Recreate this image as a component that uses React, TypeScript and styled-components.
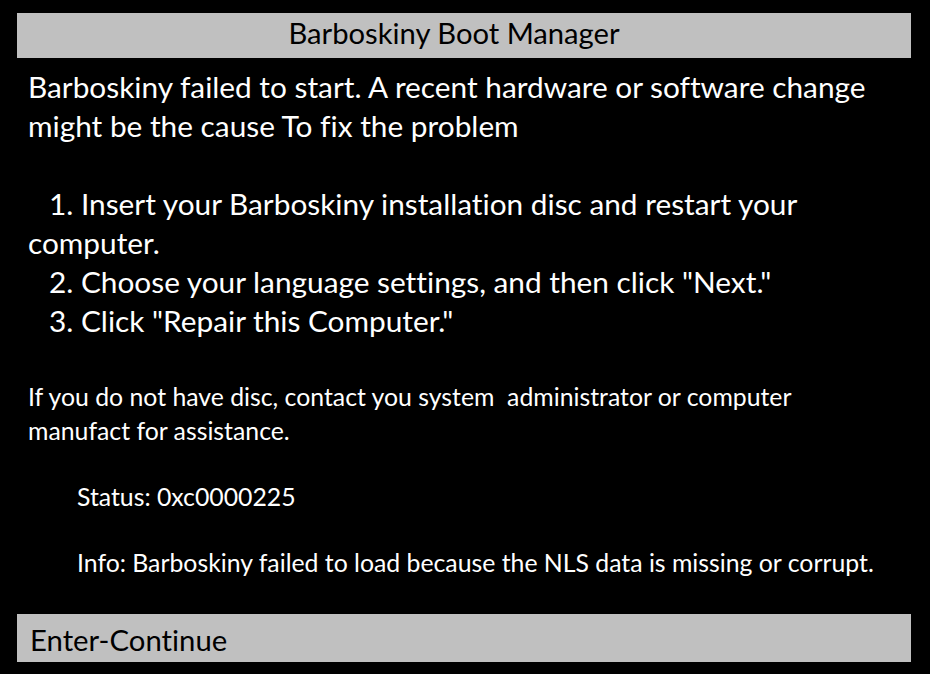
import React from "react";
import styled, { createGlobalStyle } from "styled-components";

const GlobalStyle = createGlobalStyle`
  html, body {
    margin: 0;
    padding: 0;
    background: #000;
  }
  body {
    font-family: Lato, "Open Sans", sans-serif;
    font-variant-ligatures: none;
    color: #fff;
  }
`;

const Screen = styled.div`
  width: 930px;
  height: 674px;
  box-sizing: border-box;
  padding: 13px 19px 0 17px;
  display: flex;
  flex-direction: column;
  background: #000;
`;

const Bar = styled.div<{ $align: "center" | "left" }>`
  background: #c0c0c0;
  color: #000;
  box-sizing: border-box;
  height: ${(p) => (p.$align === "center" ? 45 : 48)}px;
  font-size: ${(p) => (p.$align === "center" ? 29.2 : 29.3)}px;
  line-height: ${(p) => (p.$align === "center" ? 39 : 45)}px;
  text-align: ${(p) => p.$align};
  padding: ${(p) => (p.$align === "center" ? "0 20px 6px 0" : "3px 0 0 13px")};
  white-space: nowrap;
`;

const Body = styled.div`
  margin-top: 9px;
  padding: 0 26px 0 11px;
  display: flex;
  flex-direction: column;
`;

const Large = styled.p<{ $indent?: boolean; $gap?: number }>`
  margin: ${(p) => p.$gap ?? 0}px 0 0;
  font-size: 29.8px;
  line-height: 39px;
  text-indent: ${(p) => (p.$indent ? 21 : 0)}px;
`;

const Small = styled.p<{ $indent?: boolean; $gap?: number }>`
  margin: ${(p) => p.$gap ?? 0}px 0 0;
  font-size: 24.8px;
  line-height: 33.5px;
  padding-left: ${(p) => (p.$indent ? 49 : 0)}px;
  white-space: pre-wrap;
`;

const Footer = styled(Bar)`
  margin-top: 35px;
`;

export default function App() {
  return (
    <>
      <GlobalStyle />
      <Screen>
        <Bar $align="center">Barboskiny Boot Manager</Bar>
        <Body>
          <Large>
            Barboskiny failed to start. A recent hardware or software change might be the cause To fix the problem
          </Large>
          <Large $indent $gap={39}>
            1. Insert your Barboskiny installation disc and restart your computer.
          </Large>
          <Large $indent>2. Choose your language settings, and then click "Next."</Large>
          <Large $indent>3. Click "Repair this Computer."</Large>
          <Small $gap={40}>
            {"If you do not have disc, contact you system  administrator or computer manufact for assistance."}
          </Small>
          <Small $indent $gap={32.5}>Status: 0xc0000225</Small>
          <Small $indent $gap={32.5}>
            Info: Barboskiny failed to load because the NLS data is missing or corrupt.
          </Small>
        </Body>
        <Footer $align="left">Enter-Continue</Footer>
      </Screen>
    </>
  );
}
